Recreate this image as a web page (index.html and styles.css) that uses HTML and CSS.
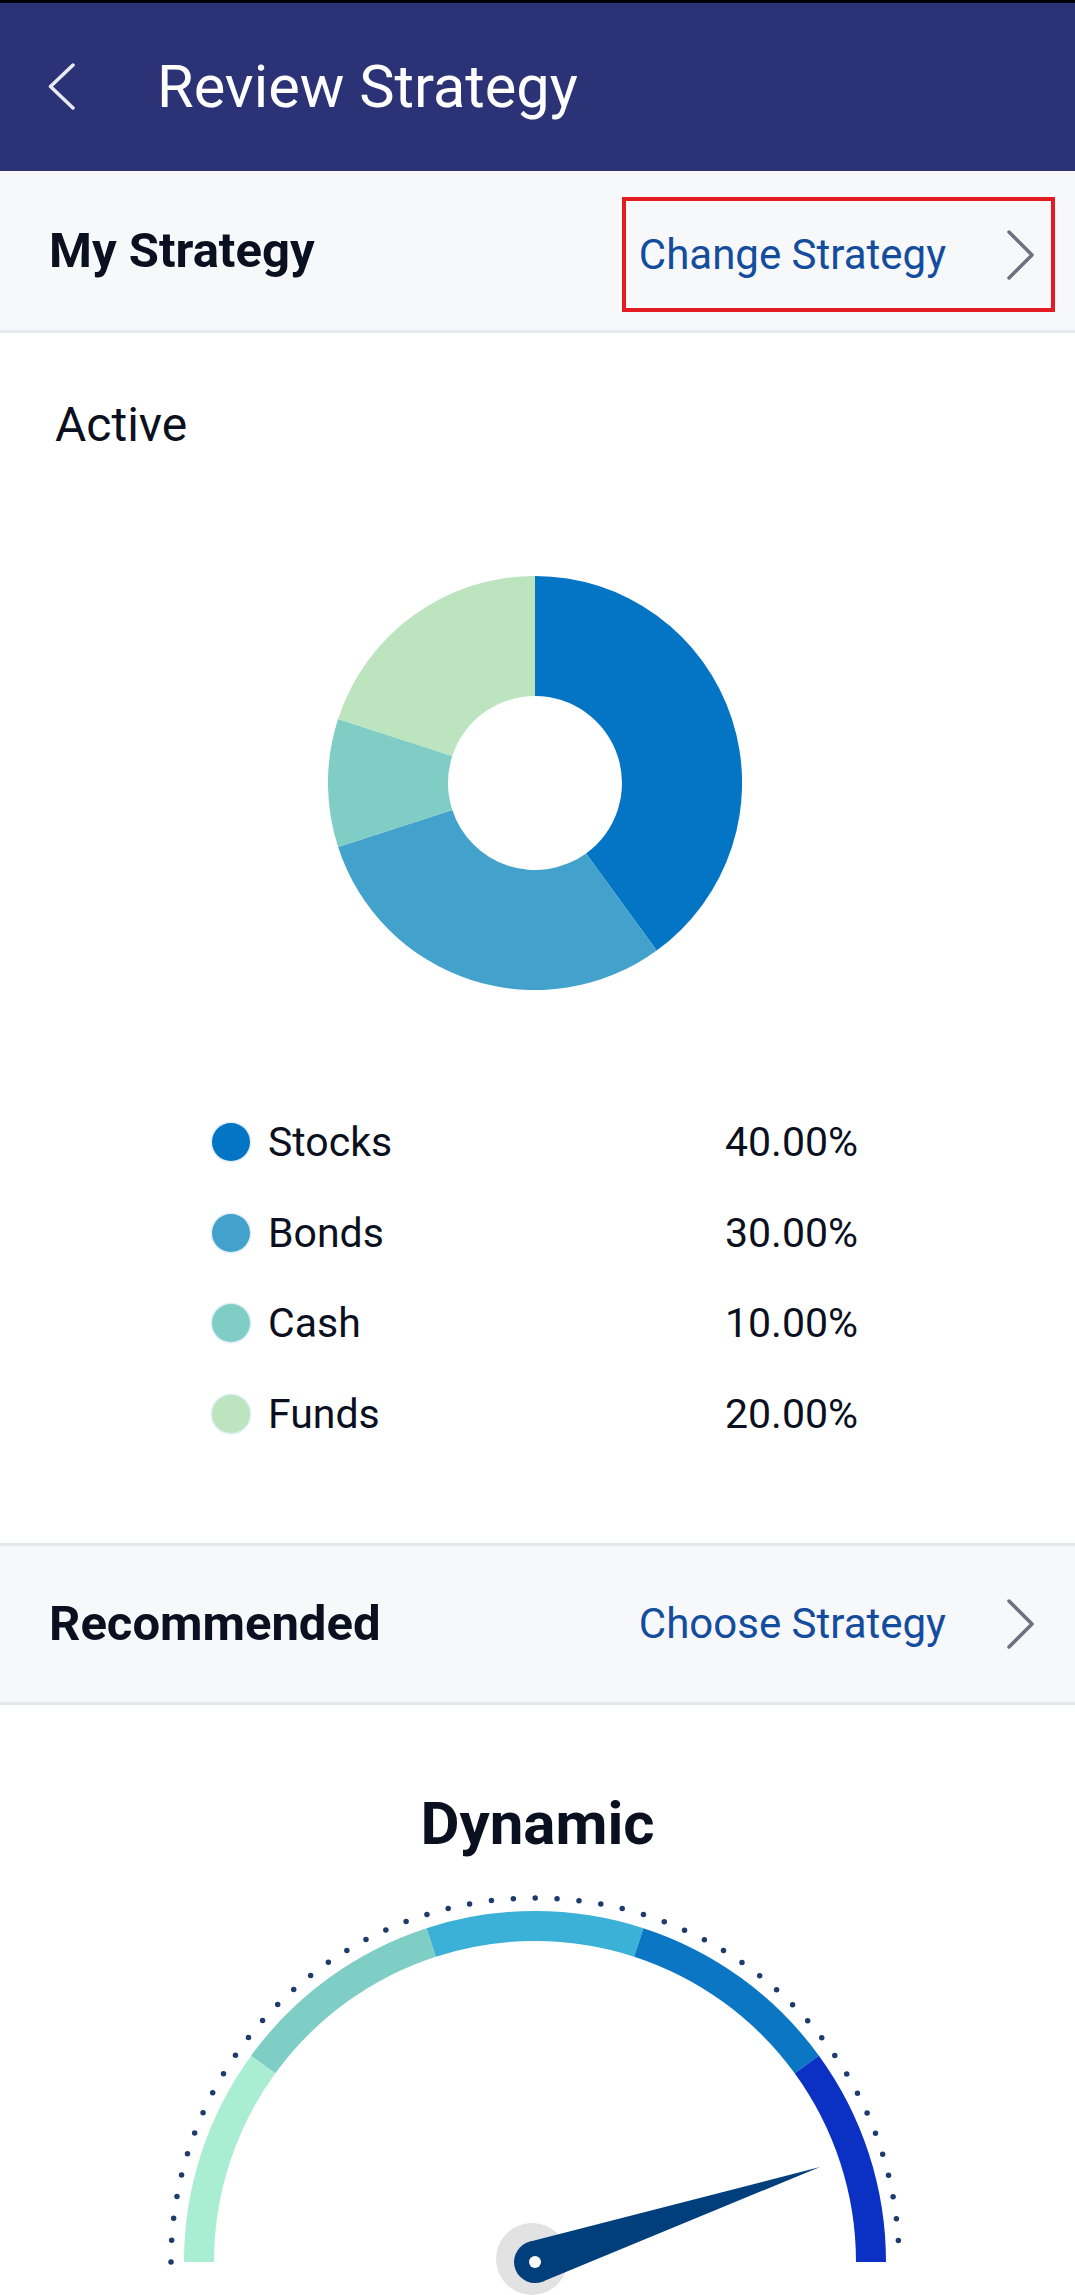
FILE: index.html
```html
<!DOCTYPE html>
<html lang="en">
<head>
<meta charset="utf-8">
<title>Review Strategy</title>
<link rel="stylesheet" href="styles.css">
</head>
<body>
<div class="statusbar"></div>
<header class="appbar">
  <svg class="back" width="28" height="48" viewBox="0 0 28 48" aria-hidden="true">
    <path d="M25 2 L2.5 23.5 L25 45" fill="none" stroke="#e9eaf3" stroke-width="3.5" stroke-linecap="round" stroke-linejoin="round"/>
  </svg>
  <h1 class="title">Review Strategy</h1>
</header>

<section class="bar bar-first">
  <h2 class="bar-title">My Strategy</h2>
  <a class="bar-link highlighted">
    <span class="link-text">Change Strategy</span>
    <svg class="chev" width="30" height="52" viewBox="0 0 30 52" aria-hidden="true">
      <path d="M4 3 L27 26 L4 49" fill="none" stroke="#6f6f7f" stroke-width="3.5" stroke-linecap="round" stroke-linejoin="round"/>
    </svg>
  </a>
</section>

<section class="active">
  <div class="active-label">Active</div>
  <div class="donut-wrap">
    <svg class="donut" width="414" height="414" viewBox="0 0 414 414">
      <path d="M207 0 A207 207 0 0 1 328.7 374.5 L258.1 277.4 A87 87 0 0 0 207 120 Z" fill="#0474c4"/>
      <path d="M328.7 374.5 A207 207 0 0 1 10.1 271 L124.3 233.9 A87 87 0 0 0 258.1 277.4 Z" fill="#43a2cb"/>
      <path d="M10.1 271 A207 207 0 0 1 10.1 143 L124.3 180.1 A87 87 0 0 0 124.3 233.9 Z" fill="#80cdc5"/>
      <path d="M10.1 143 A207 207 0 0 1 207 0 L207 120 A87 87 0 0 0 124.3 180.1 Z" fill="#bbe4bf"/>
    </svg>
  </div>
  <ul class="legend">
    <li class="legend-row"><span class="dot dot-stocks"></span><span class="legend-name">Stocks</span><span class="legend-val">40.00%</span></li>
    <li class="legend-row"><span class="dot dot-bonds"></span><span class="legend-name">Bonds</span><span class="legend-val">30.00%</span></li>
    <li class="legend-row"><span class="dot dot-cash"></span><span class="legend-name">Cash</span><span class="legend-val">10.00%</span></li>
    <li class="legend-row"><span class="dot dot-funds"></span><span class="legend-name">Funds</span><span class="legend-val">20.00%</span></li>
  </ul>
</section>

<section class="bar bar-second">
  <h2 class="bar-title">Recommended</h2>
  <a class="bar-link">
    <span class="link-text">Choose Strategy</span>
    <svg class="chev" width="30" height="52" viewBox="0 0 30 52" aria-hidden="true">
      <path d="M4 3 L27 26 L4 49" fill="none" stroke="#6f6f7f" stroke-width="3.5" stroke-linecap="round" stroke-linejoin="round"/>
    </svg>
  </a>
</section>

<section class="recommended">
  <h3 class="strategy-name">Dynamic</h3>
  <svg class="gauge" width="1075" height="420" viewBox="0 0 1075 420">
    <path d="M171 387 A364 364 0 0 1 899 387" fill="none" stroke="#1d3b6c" stroke-width="5.5" stroke-linecap="round" stroke-dasharray="0 21.99"/>
    <path d="M199 387 A336 336 0 0 1 263.2 189.5" fill="none" stroke="#a9eed3" stroke-width="30"/>
    <path d="M263.2 189.5 A336 336 0 0 1 431.2 67.4" fill="none" stroke="#7fcec6" stroke-width="30"/>
    <path d="M431.2 67.4 A336 336 0 0 1 638.8 67.4" fill="none" stroke="#3bb1d8" stroke-width="30"/>
    <path d="M638.8 67.4 A336 336 0 0 1 806.8 189.5" fill="none" stroke="#0b76c3" stroke-width="30"/>
    <path d="M806.8 189.5 A336 336 0 0 1 871 387" fill="none" stroke="#0a30c4" stroke-width="30"/>
    <circle cx="532" cy="384" r="36" fill="#e2e2e2"/>
    <circle cx="535" cy="387" r="21" fill="#003f7b"/>
    <polygon points="528.4,367.1 820,292 541.6,406.9" fill="#003f7b"/>
    <circle cx="535" cy="387" r="6" fill="#ffffff"/>
  </svg>
</section>
</body>
</html>
```

FILE: styles.css
```css
* {
  box-sizing: border-box;
}

html, body {
  margin: 0;
  padding: 0;
  background: #ffffff;
}

body {
  width: 1075px;
  font-family: Roboto, "Noto Sans", "Liberation Sans", sans-serif;
  color: #0b1020;
}

.statusbar {
  height: 3px;
  background: #000000;
}

.appbar {
  height: 168px;
  background: #2b3275;
  display: flex;
  align-items: center;
  padding-left: 48px;
}

.back {
  display: block;
  flex: none;
}

.title {
  margin: 0 0 0 81px;
  font-size: 59.5px;
  font-weight: 400;
  color: #ffffff;
  line-height: 68px;
}

.bar {
  display: flex;
  align-items: center;
  justify-content: space-between;
  background: #f7f8f9;
  padding: 0 20px 0 49px;
}

.bar-first {
  height: 162px;
  border-bottom: 3px solid #e6e9ec;
}

.bar-second {
  height: 162px;
  border-top: 3px solid #e3e8ec;
  border-bottom: 3px solid #e3e8ec;
}

.bar-title {
  margin: 0;
  font-size: 49px;
  font-weight: 700;
  color: #0b1020;
  line-height: 56px;
}

.bar-link {
  display: flex;
  align-items: center;
  height: 115px;
  padding: 0 16px 0 13px;
  border: 4px solid transparent;
  color: #144c9e;
  text-decoration: none;
}

.bar-first .bar-link {
  margin-top: 8px;
}

.highlighted {
  border-color: #e51b24;
}

.link-text {
  font-size: 42px;
  line-height: 50px;
  margin-right: 59px;
}

.chev {
  display: block;
  flex: none;
}

.active {
  padding: 64px 0 84px;
}

.active-label {
  padding-left: 55px;
  font-size: 48px;
  line-height: 56px;
  color: #0b1020;
}

.donut-wrap {
  margin-top: 123px;
  display: flex;
  justify-content: center;
  padding-right: 5px;
}

.donut {
  display: block;
}

.legend {
  list-style: none;
  margin: 107px 0 0 212px;
  padding: 0;
  width: 646px;
}

.legend-row {
  display: flex;
  align-items: center;
  height: 90.5px;
  font-size: 41px;
  color: #0b1020;
}

.dot {
  flex: none;
  width: 38px;
  height: 38px;
  border-radius: 50%;
  box-shadow: 0 0 0 1.5px #e2eff6;
  margin-right: 18px;
}

.dot-stocks { background: #0474c4; }
.dot-bonds { background: #43a2cb; }
.dot-cash { background: #80cdc5; }
.dot-funds { background: #bbe4bf; }

.legend-name {
  flex: 1;
}

.legend-val {
  text-align: right;
}

.recommended {
  text-align: center;
}

.strategy-name {
  margin: 84px 0 0;
  font-size: 60px;
  font-weight: 700;
  line-height: 70px;
  color: #0b1020;
}

.gauge {
  display: block;
  margin-top: 16px;
}
```
